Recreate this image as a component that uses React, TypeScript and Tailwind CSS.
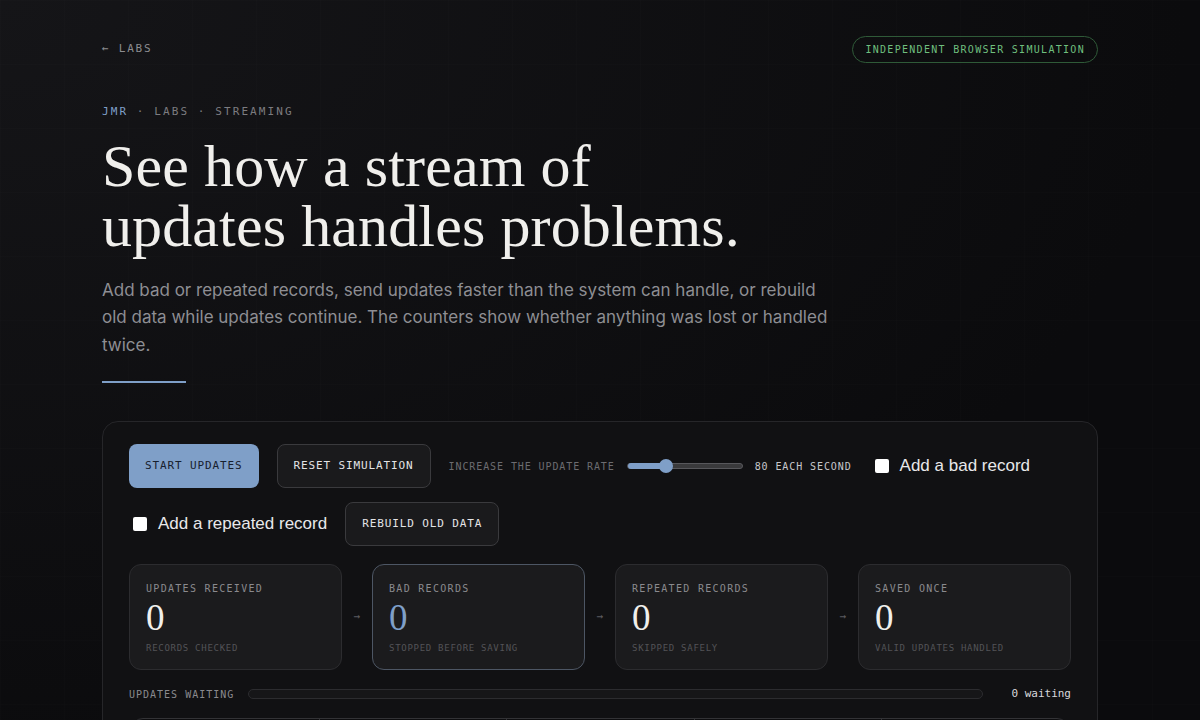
import React from "react";

const mono = "font-['DejaVu_Sans_Mono','Liberation_Mono',monospace]";
const serif = "font-['Liberation_Serif','DejaVu_Serif',serif]";

const stages = [
  { label: "UPDATES RECEIVED", sub: "RECORDS CHECKED", accent: false },
  { label: "BAD RECORDS", sub: "STOPPED BEFORE SAVING", accent: true },
  { label: "REPEATED RECORDS", sub: "SKIPPED SAFELY", accent: false },
  { label: "SAVED ONCE", sub: "VALID UPDATES HANDLED", accent: false },
];

function Checkbox({ label }: { label: string }) {
  return (
    <label className="flex items-center gap-[11px] text-[17px] text-[#e8e8ea] font-['Liberation_Sans','Inter',sans-serif]">
      <span className="w-[14px] h-[14px] rounded-[2px] bg-white shrink-0" />
      {label}
    </label>
  );
}

function GhostButton({ children }: { children: React.ReactNode }) {
  return (
    <button
      className={`${mono} h-[44px] px-[16px] rounded-[8px] border border-[#3a3a3d] bg-[#1a1a1c] text-[11px] tracking-[0.08em] text-[#e4e4e6]`}
    >
      {children}
    </button>
  );
}

export default function App() {
  return (
    <div className="min-h-screen bg-[#0c0c0e] bg-[linear-gradient(rgba(255,255,255,0.008)_1px,transparent_1px),linear-gradient(90deg,rgba(255,255,255,0.008)_1px,transparent_1px),radial-gradient(ellipse_at_top_left,#151518,#0b0b0d_70%)] bg-[size:64px_64px,64px_64px,100%_100%]">
      <div className="max-w-[996px] mx-auto pt-[36px]">
        {/* top bar */}
        <div className="flex items-center justify-between h-[27px]">
          <span className={`${mono} text-[11px] tracking-[0.16em] text-[#8c8c90]`}>← LABS</span>
          <span
            className={`${mono} h-[27px] px-[12px] flex items-center rounded-full border border-[#2f5a38] text-[10px] tracking-[0.13em] text-[#6fbf7e]`}
          >
            INDEPENDENT BROWSER SIMULATION
          </span>
        </div>

        {/* hero */}
        <div className={`${mono} mt-[41px] text-[11px] tracking-[0.19em] text-[#7c7c80]`}>
          <span className="text-[#7f9fc8]">JMR</span> · LABS · STREAMING
        </div>
        <h1 className={`${serif} mt-[15px] text-[60px] leading-[60px] tracking-[0.002em] text-[#f0efec] font-normal`}>
          See how a stream of
          <br />
          updates handles problems.
        </h1>
        <p className="mt-[21px] max-w-[730px] font-['Inter',sans-serif] text-[17px] leading-[27.5px] text-[#8e8e93]">
          Add bad or repeated records, send updates faster than the system can handle, or rebuild old data
          while updates continue. The counters show whether anything was lost or handled twice.
        </p>
        <div className="mt-[22px] w-[84px] h-[2px] bg-[#7f9fc8]" />

        {/* simulation panel */}
        <div className="mt-[38px] rounded-[16px] border border-[#262629] bg-[#111113] px-[26px] pt-[22px]">
          <div className="flex flex-wrap items-center gap-x-[18px] gap-y-[14px]">
            <button
              className={`${mono} h-[44px] px-[16px] rounded-[8px] bg-[#7f9fc8] text-[11px] tracking-[0.08em] text-[#17202e]`}
            >
              START UPDATES
            </button>
            <GhostButton>RESET SIMULATION</GhostButton>
            <div className={`${mono} flex items-center gap-[12px] text-[10px] tracking-[0.09em]`}>
              <span className="text-[#6c6c70]">INCREASE THE UPDATE RATE</span>
              <div className="relative w-[116px] h-[6px] rounded-full bg-[#3a3a3c] border border-[#58585c]">
                <div className="absolute left-0 top-[-1px] h-[6px] w-[40px] rounded-full bg-[#7f9fc8]" />
                <div className="absolute left-[31px] top-[-5px] w-[14px] h-[14px] rounded-full bg-[#7f9fc8]" />
              </div>
              <span className="text-[#c8c8cc]">80 EACH SECOND</span>
            </div>
            <div className="ml-[5px]">
              <Checkbox label="Add a bad record" />
            </div>
            <div className="ml-[4px]">
              <Checkbox label="Add a repeated record" />
            </div>
            <GhostButton>REBUILD OLD DATA</GhostButton>
          </div>

          {/* stage cards */}
          <div className="mt-[18px] flex items-center">
            {stages.map((s, i) => (
              <React.Fragment key={s.label}>
                {i > 0 && (
                  <span className={`${mono} w-[30px] text-center text-[11px] text-[#5c5c60]`}>→</span>
                )}
                <div
                  className={`flex-1 h-[106px] rounded-[12px] border bg-[#1b1b1d] px-[16px] pt-[18px] ${
                    s.accent ? "border-[#4d5664]" : "border-[#2c2c2f]"
                  }`}
                >
                  <div className={`${mono} text-[10px] tracking-[0.13em] text-[#8a8a8e] leading-[12px]`}>
                    {s.label}
                  </div>
                  <div
                    className={`${serif} mt-[3px] text-[37px] leading-[40px] ${
                      s.accent ? "text-[#7f9fc8]" : "text-[#f0efec]"
                    }`}
                  >
                    0
                  </div>
                  <div className={`${mono} mt-[4px] text-[9px] tracking-[0.08em] text-[#535357] leading-[12px]`}>
                    {s.sub}
                  </div>
                </div>
              </React.Fragment>
            ))}
          </div>

          {/* queue */}
          <div className="mt-[16px] flex items-center gap-[14px]">
            <span className={`${mono} text-[10px] tracking-[0.1em] text-[#8a8a8e]`}>UPDATES WAITING</span>
            <div className="flex-1 h-[10px] rounded-full border border-[#2c2c2f] bg-[#161618]" />
            <span className={`${mono} ml-[14px] text-[11px] text-[#d8d8dc]`}>0 waiting</span>
          </div>

          {/* log table */}
          <div className="mt-[15px] mx-[2px] grid grid-cols-5 h-[60px] rounded-t-[12px] border border-[#333336] bg-[#0d0d0f]">
            <div />
            <div className="border-l border-[#333336]" />
            <div className="border-l border-[#333336]" />
            <div className="border-l border-[#333336]" />
            <div className="border-l border-[#333336]" />
          </div>
        </div>
      </div>
    </div>
  );
}
